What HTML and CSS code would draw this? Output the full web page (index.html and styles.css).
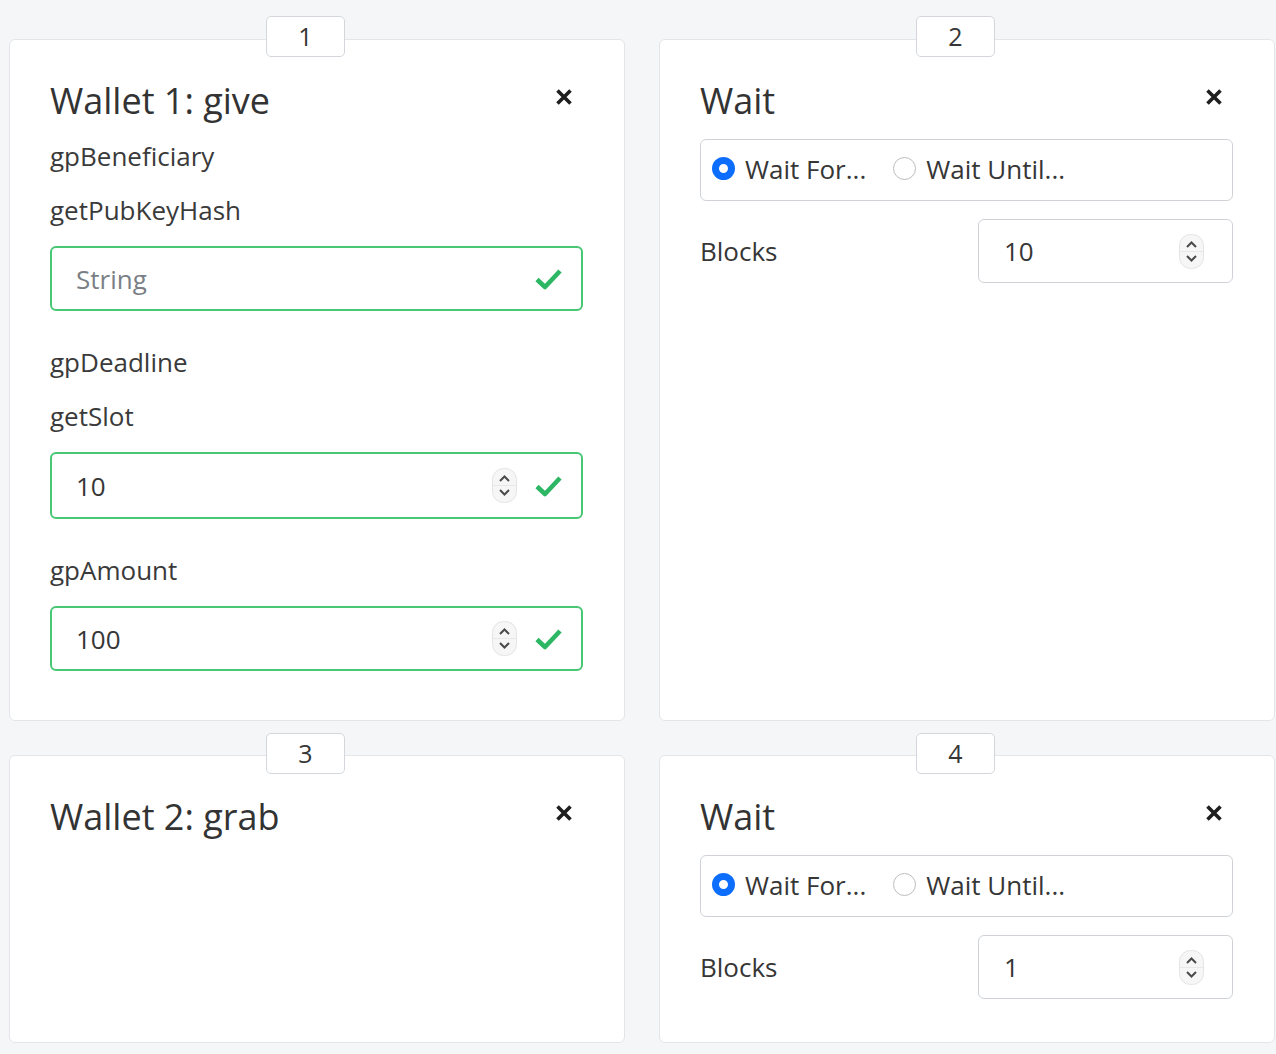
FILE: index.html
```html
<!DOCTYPE html>
<html>
<head>
<meta charset="utf-8">
<link rel="stylesheet" href="styles.css">
</head>
<body>
<div class="grid">

  <div class="slot">
    <div class="badge">1</div>
    <div class="card">
      <div class="card-head">
        <h2 class="title">Wallet 1: give</h2>
        <button class="close" aria-label="close"><svg width="18" height="18" viewBox="0 0 18 18"><path d="M2.5 2.5L15.5 15.5M15.5 2.5L2.5 15.5" stroke="#1f1f1f" stroke-width="3.6"/></svg></button>
      </div>
      <div class="field">
        <div class="field-name">gpBeneficiary</div>
        <div class="field-type">getPubKeyHash</div>
        <div class="input valid">
          <span class="placeholder">String</span>
          <svg class="check" width="29" height="24" viewBox="0 0 29 24"><path d="M3 12.5L11 20L26 4" fill="none" stroke="#2db764" stroke-width="4.6" stroke-linejoin="round"/></svg>
        </div>
      </div>
      <div class="field">
        <div class="field-name">gpDeadline</div>
        <div class="field-type">getSlot</div>
        <div class="input valid tall">
          <span class="value">10</span>
          <svg class="spin" width="25" height="35" viewBox="0 0 25 35"><rect x="0.5" y="0.5" width="24" height="34" rx="11" fill="#f6f6f6" stroke="#e4e4e4"/><path d="M1 17.5H24" stroke="#e8e8e8"/><path d="M8 13L12.5 8.5L17 13M8 22L12.5 26.5L17 22" fill="none" stroke="#4a4a4a" stroke-width="2"/></svg>
          <svg class="check" width="29" height="24" viewBox="0 0 29 24"><path d="M3 12.5L11 20L26 4" fill="none" stroke="#2db764" stroke-width="4.6" stroke-linejoin="round"/></svg>
        </div>
      </div>
      <div class="field">
        <div class="field-type">gpAmount</div>
        <div class="input valid">
          <span class="value">100</span>
          <svg class="spin" width="25" height="35" viewBox="0 0 25 35"><rect x="0.5" y="0.5" width="24" height="34" rx="11" fill="#f6f6f6" stroke="#e4e4e4"/><path d="M1 17.5H24" stroke="#e8e8e8"/><path d="M8 13L12.5 8.5L17 13M8 22L12.5 26.5L17 22" fill="none" stroke="#4a4a4a" stroke-width="2"/></svg>
          <svg class="check" width="29" height="24" viewBox="0 0 29 24"><path d="M3 12.5L11 20L26 4" fill="none" stroke="#2db764" stroke-width="4.6" stroke-linejoin="round"/></svg>
        </div>
      </div>
    </div>
  </div>

  <div class="slot">
    <div class="badge">2</div>
    <div class="card">
      <div class="card-head">
        <h2 class="title">Wait</h2>
        <button class="close" aria-label="close"><svg width="18" height="18" viewBox="0 0 18 18"><path d="M2.5 2.5L15.5 15.5M15.5 2.5L2.5 15.5" stroke="#1f1f1f" stroke-width="3.6"/></svg></button>
      </div>
      <div class="radios">
        <label class="radio"><span class="dot on"></span>Wait For...</label>
        <label class="radio"><span class="dot"></span>Wait Until...</label>
      </div>
      <div class="blocks">
        <span class="blocks-label">Blocks</span>
        <div class="num">
          <span class="value">10</span>
          <svg class="spin" width="25" height="35" viewBox="0 0 25 35"><rect x="0.5" y="0.5" width="24" height="34" rx="11" fill="#f6f6f6" stroke="#e4e4e4"/><path d="M1 17.5H24" stroke="#e8e8e8"/><path d="M8 13L12.5 8.5L17 13M8 22L12.5 26.5L17 22" fill="none" stroke="#4a4a4a" stroke-width="2"/></svg>
        </div>
      </div>
    </div>
  </div>

  <div class="slot">
    <div class="badge">3</div>
    <div class="card">
      <div class="card-head">
        <h2 class="title">Wallet 2: grab</h2>
        <button class="close" aria-label="close"><svg width="18" height="18" viewBox="0 0 18 18"><path d="M2.5 2.5L15.5 15.5M15.5 2.5L2.5 15.5" stroke="#1f1f1f" stroke-width="3.6"/></svg></button>
      </div>
    </div>
  </div>

  <div class="slot">
    <div class="badge">4</div>
    <div class="card">
      <div class="card-head">
        <h2 class="title">Wait</h2>
        <button class="close" aria-label="close"><svg width="18" height="18" viewBox="0 0 18 18"><path d="M2.5 2.5L15.5 15.5M15.5 2.5L2.5 15.5" stroke="#1f1f1f" stroke-width="3.6"/></svg></button>
      </div>
      <div class="radios">
        <label class="radio"><span class="dot on"></span>Wait For...</label>
        <label class="radio"><span class="dot"></span>Wait Until...</label>
      </div>
      <div class="blocks">
        <span class="blocks-label">Blocks</span>
        <div class="num">
          <span class="value">1</span>
          <svg class="spin" width="25" height="35" viewBox="0 0 25 35"><rect x="0.5" y="0.5" width="24" height="34" rx="11" fill="#f6f6f6" stroke="#e4e4e4"/><path d="M1 17.5H24" stroke="#e8e8e8"/><path d="M8 13L12.5 8.5L17 13M8 22L12.5 26.5L17 22" fill="none" stroke="#4a4a4a" stroke-width="2"/></svg>
        </div>
      </div>
    </div>
  </div>

</div>
</body>
</html>
```

FILE: styles.css
```css
* { box-sizing: border-box; }
html, body {
  margin: 0;
  padding: 0;
  background: #f5f6f8;
  font-family: "Open Sans", "Noto Sans", sans-serif;
  color: #363636;
}
.grid {
  display: grid;
  grid-template-columns: 616px 616px;
  column-gap: 34px;
  row-gap: 12px;
  padding: 16px 0 0 9px;
}
.slot {
  display: flex;
  flex-direction: column;
}
.badge {
  position: relative;
  z-index: 1;
  align-self: flex-start;
  margin-left: 257px;
  margin-bottom: -18px;
  width: 79px;
  height: 41px;
  border: 1px solid #d3d7dc;
  border-radius: 5px;
  background: #fff;
  font-size: 25px;
  line-height: 39px;
  text-align: center;
  color: #363636;
}
.slot:nth-child(n+3) .badge { margin-bottom: -19px; }
.card {
  flex: 1;
  background: #fff;
  border: 1px solid #e3e5e8;
  border-radius: 6px;
  padding: 40px 41px 43px 40px;
}
.card-head {
  display: flex;
  justify-content: space-between;
  align-items: flex-start;
  margin-bottom: 19px;
}
.title {
  margin: 0;
  font-size: 36px;
  line-height: 40px;
  padding-top: 1px;
  margin-bottom: -1px;
  font-weight: 400;
  color: #333;
}
.close {
  border: 0;
  background: none;
  padding: 0;
  margin: 8px 10px 0 0;
  width: 18px;
  height: 18px;
  display: flex;
}
.card-head + .field { padding-top: 2px; }
.field + .field { margin-top: 36px; }
.field:last-child { margin-bottom: 6px; }
.field-name, .field-type {
  font-size: 26px;
  line-height: 30px;
  color: #3a3a3a;
}
.field-name { margin-bottom: 24px; }
.field-type { margin-bottom: 21px; }
.input {
  height: 65px;
  border-radius: 6px;
  display: flex;
  align-items: center;
  padding: 0 18px 0 24px;
  font-size: 26px;
}
.input.tall { height: 67px; }
.input.valid { border: 2px solid #48c774; }
.placeholder { color: #7a7f86; flex: 1; }
.value { flex: 1; color: #363636; }
.spin { margin-right: 17px; }
.check { display: block; }
.radios {
  height: 62px;
  border: 1px solid #cfd3d8;
  border-radius: 6px;
  display: flex;
  align-items: center;
  gap: 27px;
  padding: 0 0 3px 11px;
  font-size: 26px;
  color: #363636;
}
.radio {
  display: flex;
  align-items: center;
  gap: 10px;
}
.dot {
  width: 23px;
  height: 23px;
  border-radius: 50%;
  border: 1px solid #bdbdbd;
  background: #fff;
}
.dot.on {
  border: 7.5px solid #0d6efd;
  background: #fff;
}
.blocks {
  display: flex;
  align-items: center;
  justify-content: space-between;
  margin-top: 18px;
}
.blocks-label {
  font-size: 26px;
  color: #363636;
}
.num {
  width: 255px;
  height: 64px;
  border: 1px solid #cfd3d8;
  border-radius: 6px;
  display: flex;
  align-items: center;
  padding: 0 28px 0 25px;
  font-size: 26px;
}
.num .spin { margin-right: 0; }
```
